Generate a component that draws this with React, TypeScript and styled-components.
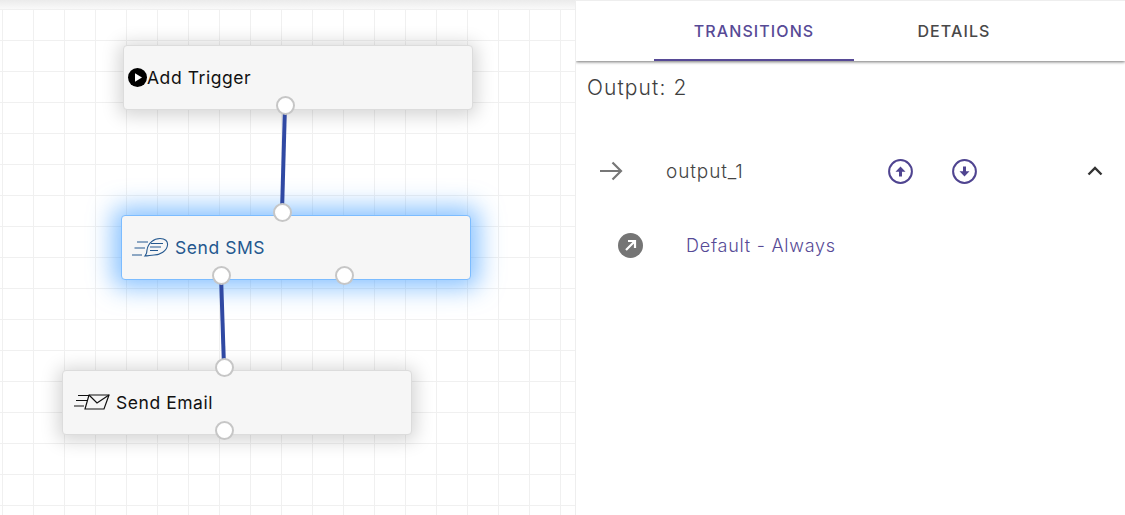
import styled, { createGlobalStyle } from "styled-components";

const GlobalStyle = createGlobalStyle`
  html, body, #root {
    margin: 0;
    padding: 0;
    width: 1125px;
    height: 515px;
    overflow: hidden;
    background: #fff;
    font-family: "Inter", "Liberation Sans", sans-serif;
  }
`;

const Page = styled.div`
  display: flex;
  width: 1125px;
  height: 515px;
`;

const Canvas = styled.div`
  position: relative;
  width: 575px;
  flex: none;
  overflow: hidden;
  border-right: 1px solid #eeeeee;
  background-color: #fff;
  background-image: linear-gradient(#f0f0f0 1px, transparent 1px),
    linear-gradient(90deg, #f0f0f0 1px, transparent 1px);
  background-size: 31px 31px;
  background-position: 2px 9px;
`;

const TopFade = styled.div`
  height: 9px;
  background: linear-gradient(#ebebeb, #f9f9f9);
`;

const Links = styled.svg`
  position: absolute;
  left: 0;
  top: 0;
  z-index: 2;
`;

const Node = styled.div<{ $x: number; $y: number; $active?: boolean }>`
  position: absolute;
  left: ${(p) => p.$x}px;
  top: ${(p) => p.$y}px;
  width: 350px;
  height: 65px;
  box-sizing: border-box;
  display: flex;
  align-items: center;
  background: #f6f6f6;
  border-radius: 4px;
  z-index: 1;
  border: 1px solid ${(p) => (p.$active ? "#7cbcff" : "#dcdcdc")};
  box-shadow: ${(p) =>
    p.$active
      ? "0 0 24px 8px rgba(60, 155, 255, 0.6)"
      : "0 2px 18px 4px rgba(0, 0, 0, 0.17)"};
`;

const NodeLabel = styled.span<{ $color?: string }>`
  font-size: 17.5px;
  letter-spacing: 0.55px;
  color: ${(p) => p.$color || "#111"};
  white-space: nowrap;
`;

const TriggerContent = styled.div`
  display: flex;
  align-items: center;
  padding-left: 4px;
  margin-top: -1px;
`;

const ActionContent = styled.div`
  display: flex;
  align-items: center;
  gap: 6px;
  padding-left: 10px;
`;

const Port = styled.div<{ $x: number; $y: number }>`
  position: absolute;
  left: ${(p) => p.$x - 9.5}px;
  top: ${(p) => p.$y - 9.5}px;
  width: 19px;
  height: 19px;
  box-sizing: border-box;
  border-radius: 50%;
  background: #fff;
  border: 2px solid #c6c6c6;
  z-index: 3;
`;

const Panel = styled.div`
  flex: 1;
  min-width: 0;
  display: flex;
  flex-direction: column;
  color: #444;
`;

const Tabs = styled.div`
  display: flex;
  height: 61px;
  padding-left: 78px;
  border-top: 1px solid #eee;
  box-sizing: border-box;
  box-shadow: 0 1px 3px rgba(0, 0, 0, 0.55);
`;

const Tab = styled.div<{ $active?: boolean }>`
  width: 200px;
  box-sizing: border-box;
  display: flex;
  align-items: center;
  justify-content: center;
  padding-top: 2px;
  font-size: 16px;
  font-weight: 500;
  letter-spacing: 1.1px;
  color: ${(p) => (p.$active ? "#574a96" : "#484848")};
  border-bottom: 2px solid ${(p) => (p.$active ? "#574a96" : "transparent")};
`;

const OutputTitle = styled.div`
  margin: 13px 0 0 11px;
  font-size: 21px;
  line-height: 28px;
  letter-spacing: 1.1px;
  font-weight: 300;
  color: #3f3f3f;
`;

const OutputRow = styled.div`
  display: grid;
  grid-template-columns: 67px 222px 64px 135px 1fr;
  align-items: center;
  height: 40px;
  margin-top: 49px;
  padding-left: 23px;
`;

const OutputName = styled.span`
  font-size: 19px;
  font-weight: 300;
  letter-spacing: 0.9px;
  color: #444;
`;

const IconCell = styled.div`
  display: flex;
  align-items: center;
`;

const RuleRow = styled.div`
  display: flex;
  align-items: center;
  gap: 43px;
  margin-top: 42px;
  padding-left: 42px;
`;

const RuleBadge = styled.div`
  width: 25px;
  height: 25px;
  border-radius: 50%;
  background: #757575;
  display: flex;
  align-items: center;
  justify-content: center;
`;

const RuleText = styled.span`
  font-size: 18px;
  font-weight: 300;
  letter-spacing: 0.75px;
  color: #574a96;
`;

function PlayIcon() {
  return (
    <svg width="19" height="19" viewBox="0 0 19 19">
      <circle cx="9.5" cy="9.5" r="9.5" fill="#000" />
      <path d="M7 5.2 L14 9.5 L7 13.8 Z" fill="#fff" />
    </svg>
  );
}

function SmsIcon() {
  return (
    <svg width="37" height="22" viewBox="0 0 37 22" fill="none" stroke="#24588f" strokeWidth="1.1">
      <path d="M5 5 H16 M2.5 11 H13 M0 18 H10" />
      <path d="M13 19 C15 17 15 15 15 13 C16 6 22 1.5 28 1.5 C33 1.5 36 4 35.5 8 C35 14 28 18 22 18 C19 18 16 19 13 19 Z" />
      <path d="M19 6.5 H31 M18 10 H29 M18 13.5 H26" />
    </svg>
  );
}

function EmailIcon() {
  return (
    <svg width="37" height="20" viewBox="0 0 37 20" fill="none" stroke="#111" strokeWidth="1.2">
      <path d="M5 2.5 H16 M3 7.5 H14 M1 13 H11" />
      <path d="M16 2 H36 L31 16 H12 Z" />
      <path d="M16 2 L24 10 L36 2" />
    </svg>
  );
}

function CircleArrow({ down }: { down?: boolean }) {
  return (
    <svg width="25" height="25" viewBox="0 0 25 25" fill="none">
      <circle cx="12.5" cy="12.5" r="11.4" stroke="#4f4490" strokeWidth="2" />
      <g transform={down ? "rotate(180 12.5 12.5)" : undefined}>
        <path d="M12.5 7.5 L17.5 12.8 H14 V17.5 H11 V12.8 H7.5 Z" fill="#4f4490" />
      </g>
    </svg>
  );
}

export default function App() {
  return (
    <Page>
      <GlobalStyle />
      <Canvas>
        <TopFade />
        <Links width="575" height="515">
          <path d="M285 105 L282 212" stroke="#3049a3" strokeWidth="4" fill="none" />
          <path d="M221 275 L224 367" stroke="#3049a3" strokeWidth="4" fill="none" />
        </Links>
        <Node $x={123} $y={45}>
          <TriggerContent>
            <PlayIcon />
            <NodeLabel>Add Trigger</NodeLabel>
          </TriggerContent>
        </Node>
        <Node $x={121} $y={215} $active>
          <ActionContent>
            <SmsIcon />
            <NodeLabel $color="#24588f">Send SMS</NodeLabel>
          </ActionContent>
        </Node>
        <Node $x={62} $y={370}>
          <ActionContent>
            <EmailIcon />
            <NodeLabel>Send Email</NodeLabel>
          </ActionContent>
        </Node>
        <Port $x={285} $y={105} />
        <Port $x={282} $y={212} />
        <Port $x={221} $y={275} />
        <Port $x={344} $y={275} />
        <Port $x={224} $y={367} />
        <Port $x={224} $y={430} />
      </Canvas>
      <Panel>
        <Tabs>
          <Tab $active>TRANSITIONS</Tab>
          <Tab>DETAILS</Tab>
        </Tabs>
        <OutputTitle>Output: 2</OutputTitle>
        <OutputRow>
          <IconCell>
            <svg width="24" height="24" viewBox="0 0 24 24" fill="none" stroke="#777" strokeWidth="2.2">
              <path d="M1 12 H22 M13.5 3.5 L22 12 L13.5 20.5" />
            </svg>
          </IconCell>
          <OutputName>output_1</OutputName>
          <IconCell>
            <CircleArrow />
          </IconCell>
          <IconCell>
            <CircleArrow down />
          </IconCell>
          <IconCell>
            <svg width="16" height="10" viewBox="0 0 16 10" fill="none" stroke="#333" strokeWidth="2.4">
              <path d="M1.5 8.5 L8 2 L14.5 8.5" />
            </svg>
          </IconCell>
        </OutputRow>
        <RuleRow>
          <RuleBadge>
            <svg width="13" height="13" viewBox="0 0 13 13" fill="none" stroke="#fff" strokeWidth="2.2">
              <path d="M2 11 L11 2 M4 2 H11 V9" />
            </svg>
          </RuleBadge>
          <RuleText>Default - Always</RuleText>
        </RuleRow>
      </Panel>
    </Page>
  );
}
